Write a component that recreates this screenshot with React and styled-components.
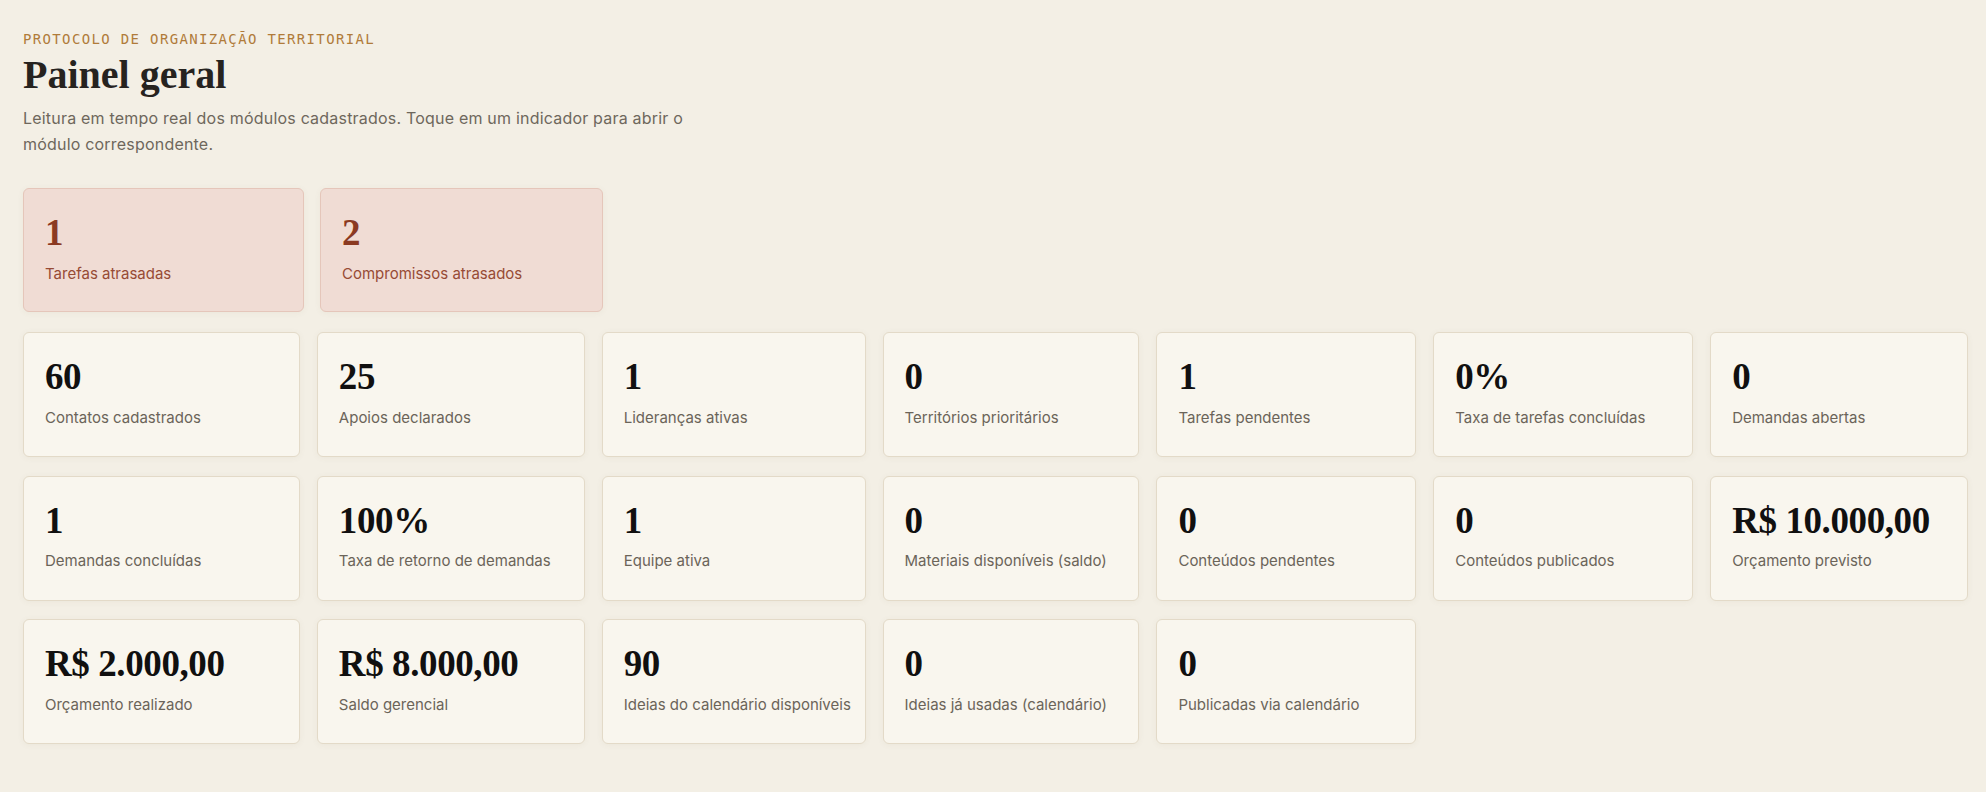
import React from 'react';
import styled, { createGlobalStyle } from 'styled-components';

const GlobalStyle = createGlobalStyle`
    html, body {
        margin: 0;
        padding: 0;
        background: #f3efe5;
    }
    body {
        font-family: Inter, "Noto Sans", sans-serif;
        color: #2a2722;
    }
`;

// whole dashboard page
const Page = styled.main`
    padding: 29px 18px 40px 23px;
    min-height: 792px;
    box-sizing: border-box;
    background: #f3efe5;
`;

const Header = styled.header`
    display: flex;
    flex-direction: column;
`;

const Eyebrow = styled.div`
    font-family: "DejaVu Sans Mono", "Liberation Mono", monospace;
    font-size: 14px;
    line-height: 20px;
    letter-spacing: 1.35px;
    color: #b07b3a;
    text-transform: uppercase;
`;

const Title = styled.h1`
    margin: 3px 0 0;
    font-family: "Liberation Serif", "DejaVu Serif", serif;
    font-size: 40px;
    line-height: 46px;
    font-weight: 700;
    color: #26231f;
`;

const Lead = styled.p`
    margin: 7px 0 0;
    max-width: 690px;
    font-size: 16px;
    line-height: 26px;
    letter-spacing: 0.2px;
    color: #6e675c;
`;

const AlertRow = styled.section`
    display: grid;
    grid-template-columns: 281px 283px;
    gap: 16px;
    margin-top: 31px;
`;

const StatGrid = styled.section`
    display: grid;
    grid-template-columns: 277fr 268fr 264fr 257fr 260fr 260fr 258fr;
    column-gap: 17px;
    row-gap: 18.5px;
    margin-top: 20px;
`;

// single indicator tile; "alert" turns it into the rose warning variant
const Card = styled.a`
    display: flex;
    flex-direction: column;
    gap: 9px;
    box-sizing: border-box;
    height: ${p => (p.$alert ? '124px' : '125px')};
    padding: 24px 12px 22px 21px;
    border-radius: 6px;
    border: 1px solid ${p => (p.$alert ? '#e5c6ba' : '#e3dac8')};
    background: ${p => (p.$alert ? '#f0dcd4' : '#f9f6ee')};
    box-shadow: 0 1px 6px rgba(120, 100, 60, 0.06);
    text-decoration: none;
    cursor: pointer;
`;

const Value = styled.div`
    font-family: "Liberation Serif", "DejaVu Serif", serif;
    font-size: 37px;
    line-height: 40.7px;
    font-weight: 700;
    letter-spacing: -0.4px;
    white-space: nowrap;
    color: ${p => (p.$alert ? '#8b3a22' : '#111010')};
`;

const Label = styled.div`
    font-size: 15px;
    line-height: 21px;
    white-space: nowrap;
    color: ${p => (p.$alert ? '#974b35' : '#6b6459')};
`;

const alerts = [
    { value: '1', label: 'Tarefas atrasadas' },
    { value: '2', label: 'Compromissos atrasados' },
];

const stats = [
    { value: '60', label: 'Contatos cadastrados' },
    { value: '25', label: 'Apoios declarados' },
    { value: '1', label: 'Lideranças ativas' },
    { value: '0', label: 'Territórios prioritários' },
    { value: '1', label: 'Tarefas pendentes' },
    { value: '0%', label: 'Taxa de tarefas concluídas' },
    { value: '0', label: 'Demandas abertas' },
    { value: '1', label: 'Demandas concluídas' },
    { value: '100%', label: 'Taxa de retorno de demandas' },
    { value: '1', label: 'Equipe ativa' },
    { value: '0', label: 'Materiais disponíveis (saldo)' },
    { value: '0', label: 'Conteúdos pendentes' },
    { value: '0', label: 'Conteúdos publicados' },
    { value: 'R$ 10.000,00', label: 'Orçamento previsto' },
    { value: 'R$ 2.000,00', label: 'Orçamento realizado' },
    { value: 'R$ 8.000,00', label: 'Saldo gerencial' },
    { value: '90', label: 'Ideias do calendário disponíveis' },
    { value: '0', label: 'Ideias já usadas (calendário)' },
    { value: '0', label: 'Publicadas via calendário' },
];

const StatCard = ({ value, label, alert }) => (
    <Card $alert={alert}>
        <Value $alert={alert}>{value}</Value>
        <Label $alert={alert}>{label}</Label>
    </Card>
);

export default function App() {
    return (
        <Page>
            <GlobalStyle />
            <Header>
                <Eyebrow>Protocolo de organização territorial</Eyebrow>
                <Title>Painel geral</Title>
                <Lead>
                    Leitura em tempo real dos módulos cadastrados. Toque em um indicador para abrir o
                    módulo correspondente.
                </Lead>
            </Header>

            <AlertRow>
                {alerts.map(a => (
                    <StatCard key={a.label} alert value={a.value} label={a.label} />
                ))}
            </AlertRow>

            <StatGrid>
                {stats.map(s => (
                    <StatCard key={s.label} value={s.value} label={s.label} />
                ))}
            </StatGrid>
        </Page>
    );
}
